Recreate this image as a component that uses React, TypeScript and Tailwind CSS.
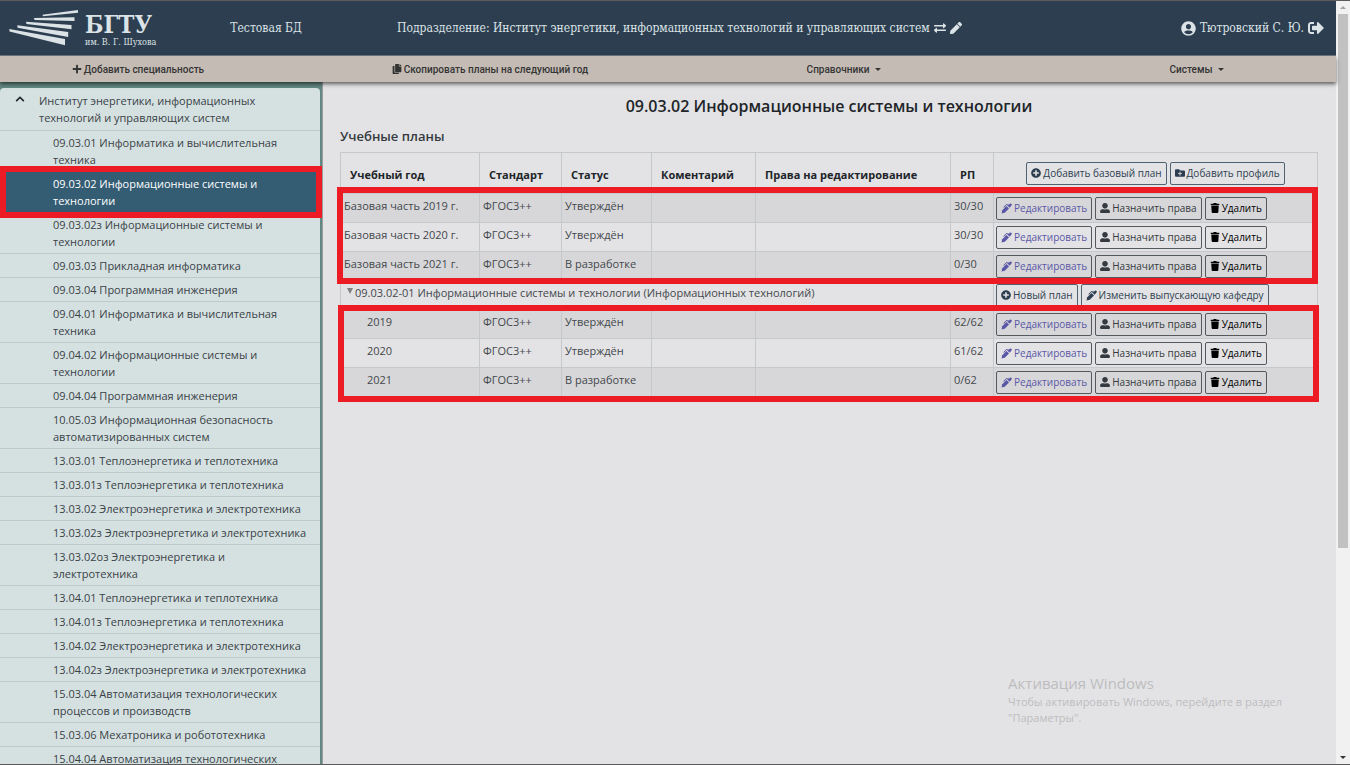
import { FaChevronUp, FaCopy, FaExchangeAlt, FaFolderPlus, FaPen, FaPlus, FaPlusCircle, FaSignOutAlt, FaTrash, FaUserAlt, FaUserCircle } from 'react-icons/fa'

const SPECIALTIES = [
  '09.03.01 Информатика и вычислительная техника',
  '09.03.02 Информационные системы и технологии',
  '09.03.02з Информационные системы и технологии',
  '09.03.03 Прикладная информатика',
  '09.03.04 Программная инженерия',
  '09.04.01 Информатика и вычислительная техника',
  '09.04.02 Информационные системы и технологии',
  '09.04.04 Программная инженерия',
  '10.05.03 Информационная безопасность автоматизированных систем',
  '13.03.01 Теплоэнергетика и теплотехника',
  '13.03.01з Теплоэнергетика и теплотехника',
  '13.03.02 Электроэнергетика и электротехника',
  '13.03.02з Электроэнергетика и электротехника',
  '13.03.02оз Электроэнергетика и электротехника',
  '13.04.01 Теплоэнергетика и теплотехника',
  '13.04.01з Теплоэнергетика и теплотехника',
  '13.04.02 Электроэнергетика и электротехника',
  '13.04.02з Электроэнергетика и электротехника',
  '15.03.04 Автоматизация технологических процессов и производств',
  '15.03.06 Мехатроника и робототехника',
  '15.04.04 Автоматизация технологических',
]

const SELECTED = '09.03.02 Информационные системы и технологии'

interface Plan {
  name: string
  status: string
  rp: string
}

const BASE_PLANS: Plan[] = [
  { name: 'Базовая часть 2019 г.', status: 'Утверждён', rp: '30/30' },
  { name: 'Базовая часть 2020 г.', status: 'Утверждён', rp: '30/30' },
  { name: 'Базовая часть 2021 г.', status: 'В разработке', rp: '0/30' },
]

const PROFILE_PLANS: Plan[] = [
  { name: '2019', status: 'Утверждён', rp: '62/62' },
  { name: '2020', status: 'Утверждён', rp: '61/62' },
  { name: '2021', status: 'В разработке', rp: '0/62' },
]

const BTN = 'inline-flex h-[23px] items-center gap-0.5 whitespace-nowrap rounded-xs border px-1 text-[10px]'
const CELL = 'border border-[#c6c9cc] px-[3px] pt-[3px] pb-0 align-top'
const HEAD = 'border border-[#c6c9cc] px-[9px] pt-2 pb-1 text-left font-bold text-[#212529]'

function Logo() {
  return (
    <svg viewBox="0 0 70 36" className="h-9 w-[70px]" fill="#dbe3e6">
      <path d="M33.500 4.800 69 0v2.800L34 6.200z" />
      <path d="M25 8 65.500 7.300v3.700L25.500 10z" />
      <path d="M17 11.800 62.500 15v4.200L17.500 14z" />
      <path d="M8.300 15.300 59.200 22v5L8.500 17.800z" />
      <path d="M.3 19 56 29v6.300L.5 21.500z" />
    </svg>
  )
}

function PenIcon() {
  return (
    <svg viewBox="0 0 22 22" className="size-[11px]" fill="currentColor">
      <path d="M1 21 2.500 14.500 11 6l5 5-8.500 8.500z" />
      <path d="m12.300 4.700 2-2 1.500 1 1.700-2.200a2 2 0 0 1 2.800 0l.7.700a2 2 0 0 1 0 2.800l-3.700 4.700z" />
      <path d="M4.500 8.500 11 2l3 1-1.500 1.500-1.500-.3-5 5.300z" />
    </svg>
  )
}

function Caret() {
  return <span className="border-x-3 border-t-3 border-x-transparent border-t-[#343434]" />
}

function PlanRow({ plan, nested, dark }: { plan: Plan; nested?: boolean; dark: boolean }) {
  return (
    <tr className={dark ? 'h-[29px] bg-[#d7d7d9]' : 'h-[29px]'}>
      <td className={nested ? 'border border-[#c6c9cc] pt-[3px] pl-[26px] align-top' : CELL}>{plan.name}</td>
      <td className={CELL}>ФГОС3++</td>
      <td className={CELL}>{plan.status}</td>
      <td className={CELL}></td>
      <td className={CELL}></td>
      <td className={CELL}>{plan.rp}</td>
      <td className="border border-[#c6c9cc] px-0.5 py-0">
        <div className="flex gap-[3px]">
          <button className={`${BTN} border-[#54595e] text-[#5a57a6]`}><PenIcon />Редактировать</button>
          <button className={`${BTN} border-[#54595e] text-[#343a40]`}><FaUserAlt />Назначить права</button>
          <button className={`${BTN} border-[#54595e] text-black`}><FaTrash />Удалить</button>
        </div>
      </td>
    </tr>
  )
}

function Sidebar() {
  return (
    <aside className="w-[323px] shrink-0 overflow-hidden border-r border-[#9a9c9e] bg-[#638783] pt-1.5 pr-0.5">
      <nav className="rounded-t-sm bg-[#d5e1e1] text-[11px] leading-[17px] text-[#3a4247]">
        <div className="flex border-b border-[#bccaca] pt-1 pb-1">
          <button aria-label="Свернуть" className="flex w-[39px] items-start justify-center pt-0.5 text-[#212529]">
            <FaChevronUp className="size-2.5" />
          </button>
          <a href="#institute" className="flex-1 pr-10">Институт энергетики, информационных технологий и управляющих систем</a>
        </div>
        <ul>
          {SPECIALTIES.map((s) => (
            <li key={s} className={s === SELECTED ? 'relative border-b border-[#345c73] bg-[#345c73] font-medium text-white' : 'border-b border-[#bccaca]'}>
              <a href="#specialty" className="block py-[3px] pr-3 pl-[53px]">{s}</a>
              {s === SELECTED && <span className="pointer-events-none absolute -inset-y-1.5 -right-0.5 left-0 z-10 border-6 border-[#ed1c24]" />}
            </li>
          ))}
        </ul>
      </nav>
    </aside>
  )
}

function PlansTable() {
  return (
    <div className="relative">
      <table className="w-full table-fixed border-collapse text-[11px] leading-[18px] text-[#43484c]">
        <colgroup>
          <col className="w-[139px]" />
          <col className="w-[82px]" />
          <col className="w-[90px]" />
          <col className="w-[104px]" />
          <col className="w-[195px]" />
          <col className="w-[43px]" />
          <col />
        </colgroup>
        <thead>
          <tr className="h-[41px]">
            <th className={HEAD}>Учебный год</th>
            <th className={HEAD}>Стандарт</th>
            <th className={HEAD}>Статус</th>
            <th className={HEAD}>Коментарий</th>
            <th className={HEAD}>Права на редактирование</th>
            <th className={HEAD}>РП</th>
            <th className="border border-[#c6c9cc] p-0 font-normal">
              <div className="flex justify-center gap-[3px]">
                <button className={`${BTN} border-[#4f6272] text-[#2d3e50]`}><FaPlusCircle />Добавить базовый план</button>
                <button className={`${BTN} border-[#4f6272] text-[#2d3e50]`}><FaFolderPlus />Добавить профиль</button>
              </div>
            </th>
          </tr>
        </thead>
        <tbody>
          {BASE_PLANS.map((p, i) => <PlanRow key={p.name} plan={p} dark={i % 2 === 0} />)}
          <tr className="h-[29px]">
            <td colSpan={6} className="border border-[#c6c9cc] px-1.5 pt-[3px] pb-0 align-top">
              <button className="flex items-start gap-0.5">
                <span className="mt-1 border-x-3 border-t-6 border-x-transparent border-t-[#808080]" />
                09.03.02-01 Информационные системы и технологии (Информационных технологий)
              </button>
            </td>
            <td className="border border-[#c6c9cc] px-0.5 py-0">
              <div className="flex gap-[3px]">
                <button className={`${BTN} border-[#4f6272] text-[#2d3e50]`}><FaPlusCircle />Новый план</button>
                <button className={`${BTN} border-[#4f6272] text-[#2d3e50]`}><PenIcon />Изменить выпускающую кафедру</button>
              </div>
            </td>
          </tr>
          {PROFILE_PLANS.map((p, i) => <PlanRow key={p.name} plan={p} nested dark={i % 2 === 0} />)}
        </tbody>
      </table>
      {/* Frames around the base plans and the profile plans */}
      <div className="pointer-events-none absolute top-[35px] right-0 -left-[3px] h-[97px] border-6 border-[#ed1c24]" />
      <div className="pointer-events-none absolute top-[153px] -right-px -left-0.5 h-[97px] border-6 border-[#ed1c24]" />
    </div>
  )
}

export default function App() {
  return (
    <div className="flex h-screen overflow-hidden border-y border-[#5a5a5a] bg-[#e3e3e5] font-['Open_Sans','Noto_Sans',sans-serif]">
      <div className="flex min-w-0 flex-1 flex-col">
        <header className="flex h-[55px] shrink-0 items-center border-b border-[#6f7a84] bg-[#2d3e50] pr-3 pl-[9px] font-['DejaVu_Serif_Condensed','DejaVu_Serif',serif] text-[12px] text-[#dbe3e6]">
          <a href="#home" className="flex items-center gap-1.5">
            <Logo />
            <span className="flex flex-col pt-1">
              <span className="text-[24px] leading-6 font-bold">БГТУ</span>
              <span className="text-[9px] leading-[10px]">им. В. Г. Шухова</span>
            </span>
          </a>
          <span className="ml-[74px]">Тестовая БД</span>
          <div className="flex flex-1 items-center justify-center gap-1 pr-[124px]">
            <span>Подразделение: Институт энергетики, информационных технологий и управляющих систем</span>
            <button aria-label="Сменить подразделение"><FaExchangeAlt /></button>
            <button aria-label="Изменить подразделение"><FaPen /></button>
          </div>
          <div className="flex items-center gap-1">
            <FaUserCircle className="size-[15px]" />
            <span>Тютровский С. Ю.</span>
            <button aria-label="Выйти"><FaSignOutAlt className="size-4" /></button>
          </div>
        </header>
        <nav className="relative z-10 grid h-[26px] shrink-0 grid-cols-[276fr_428fr_280fr_352fr] items-center bg-[#c4bcb4] font-['Roboto',sans-serif] text-[10px] font-medium text-[#343434] shadow-[0_2px_4px_rgba(0,0,0,0.6)]">
          <button className="flex items-center justify-center gap-0.5"><FaPlus />Добавить специальность</button>
          <button className="flex items-center justify-center gap-0.5"><FaCopy />Скопировать планы на следующий год</button>
          <button className="flex items-center justify-center gap-1.5">Справочники<Caret /></button>
          <button className="flex items-center justify-center gap-1.5 pl-[74px]">Системы<Caret /></button>
        </nav>
        <div className="flex min-h-0 flex-1">
          <Sidebar />
          <main className="min-w-0 flex-1 pt-3 pr-[18px] pl-[17px]">
            <h1 className="text-center text-[16px] leading-6 font-semibold text-[#212529]">09.03.02 Информационные системы и технологии</h1>
            <h2 className="mt-2 mb-1.5 text-[13px] leading-5 font-semibold text-[#343a40]">Учебные планы</h2>
            <PlansTable />
          </main>
        </div>
      </div>
      <div className="flex w-3.5 shrink-0 flex-col items-center bg-[#f1f1f1]">
        <div className="flex h-[13px] items-center"><span className="border-x-3 border-b-3 border-x-transparent border-b-[#a3a3a3]" /></div>
        <div className="h-[534px] w-[10px] bg-[#c1c1c1]" />
        <div className="mt-auto flex h-[13px] items-center"><Caret /></div>
      </div>
      <div className="pointer-events-none absolute right-[68px] bottom-[39px] text-[11px] leading-4 text-[#bdbdbf]">
        <p className="text-[15px] leading-[22px]">Активация Windows</p>
        <p>Чтобы активировать Windows, перейдите в раздел<br />"Параметры".</p>
      </div>
    </div>
  )
}
